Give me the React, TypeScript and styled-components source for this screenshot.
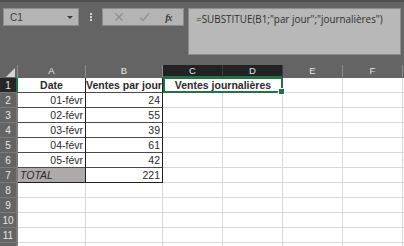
import React from 'react';
import styled, { createGlobalStyle } from 'styled-components';

const GlobalStyle = createGlobalStyle`
  html, body {
    margin: 0;
    padding: 0;
    background: #646464;
    overflow: hidden;
  }
  body {
    font-family: "Liberation Sans", Arial, sans-serif;
  }
`;

const GREEN = '#217346';
const GRID = '#d9d9d9';
const INK = '#2b2b2b';

const Page = styled.div`
  width: 404px;
  height: 246px;
  background: #646464;
  border-top: 2px solid #4f4f4f;
  box-sizing: border-box;
  overflow: hidden;
`;

const Toolbar = styled.div`
  height: 63px;
  display: flex;
  align-items: flex-start;
  padding: 6px 0 0 3px;
  box-sizing: border-box;
`;

const NameBox = styled.div`
  width: 76px;
  height: 18px;
  background: #b4b4b4;
  border: 1px solid #8c8c8c;
  box-sizing: border-box;
  display: flex;
  align-items: center;
  justify-content: space-between;
  padding: 0 5px 0 6px;
  font-size: 10px;
  color: #3c3c3c;
`;

const Caret = styled.span`
  width: 0;
  height: 0;
  border-left: 3px solid transparent;
  border-right: 3px solid transparent;
  border-top: 3px solid #3c3c3c;
`;

const Dots = styled.div`
  width: 23px;
  height: 18px;
  display: flex;
  flex-direction: column;
  align-items: center;
  justify-content: center;
  gap: 1px;
  span {
    width: 2px;
    height: 2px;
    background: #d6d6d6;
  }
`;

const FxBox = styled.div`
  width: 82px;
  height: 18px;
  background: #b4b4b4;
  border: 1px solid #8c8c8c;
  box-sizing: border-box;
  display: flex;
  align-items: center;
  justify-content: space-around;
  padding: 0 4px;
  margin-right: 4px;
`;

const FxLabel = styled.span`
  font-family: "Liberation Serif", "Times New Roman", serif;
  font-style: italic;
  font-weight: bold;
  font-size: 10px;
  color: #3c3c3c;
  letter-spacing: -1px;
`;

const FormulaBox = styled.div`
  width: 213px;
  height: 47px;
  background: #b8b8b8;
  border: 1px solid #8c8c8c;
  box-sizing: border-box;
  padding: 3px 0 0 7px;
  font-family: "Open Sans", "Liberation Sans", sans-serif;
  font-size: 9.9px;
  line-height: 14px;
  color: #2e2e2e;
  white-space: nowrap;
`;

const Sheet = styled.div`
  display: grid;
  grid-template-columns: 18px 68px 77px 60px 60px 60px 60px 1fr;
  grid-template-rows: 13px repeat(12, 15px);
  font-family: "Liberation Sans", Arial, sans-serif;
  font-size: 10.5px;
`;

const Corner = styled.div`
  background: #646464;
  border-right: 1px solid #8c8c8c;
  position: relative;
  &::after {
    content: '';
    position: absolute;
    right: 2px;
    bottom: 1px;
    width: 0;
    height: 0;
    border-left: 9px solid transparent;
    border-bottom: 9px solid #d4d4d4;
  }
`;

const ColHead = styled.div<{ $active?: boolean }>`
  background: ${(p) => (p.$active ? '#222222' : '#646464')};
  color: ${(p) => (p.$active ? '#dfe9ef' : '#e6e6e6')};
  border-right: 1px solid ${(p) => (p.$active ? '#3c3c3c' : '#8c8c8c')};
  border-bottom: 2px solid ${(p) => (p.$active ? GREEN : '#646464')};
  box-sizing: border-box;
  display: flex;
  align-items: center;
  justify-content: center;
  font-size: 9.5px;
`;

const RowHead = styled.div<{ $active?: boolean }>`
  background: ${(p) => (p.$active ? '#262626' : '#646464')};
  color: ${(p) => (p.$active ? '#dfe9ef' : '#e6e6e6')};
  border-right: 2px solid ${(p) => (p.$active ? GREEN : '#7a7a7a')};
  border-bottom: 1px solid #7a7a7a;
  box-sizing: border-box;
  display: flex;
  align-items: center;
  justify-content: center;
  font-size: 10px;
`;

const Cell = styled.div<{
  $align?: 'left' | 'center' | 'right';
  $bold?: boolean;
  $italic?: boolean;
  $fill?: string;
  $right?: string;
  $bottom?: string;
}>`
  background: ${(p) => p.$fill || '#ffffff'};
  border-right: 1px solid ${(p) => p.$right || GRID};
  border-bottom: 1px solid ${(p) => p.$bottom || GRID};
  box-sizing: border-box;
  display: flex;
  align-items: center;
  justify-content: ${(p) =>
    p.$align === 'left' ? 'flex-start' : p.$align === 'center' ? 'center' : 'flex-end'};
  padding: 0 2px 0 2px;
  font-weight: ${(p) => (p.$bold ? 'bold' : 'normal')};
  font-style: ${(p) => (p.$italic ? 'italic' : 'normal')};
  color: ${INK};
  white-space: nowrap;
  overflow: hidden;
`;

const Selection = styled.div`
  grid-column: span 2;
  position: relative;
  background: #ffffff;
  border: 2px solid ${GREEN};
  border-top-width: 1px;
  box-sizing: border-box;
  display: flex;
  align-items: center;
  justify-content: center;
  font-weight: bold;
  color: ${INK};
  white-space: nowrap;
`;

const Handle = styled.span`
  position: absolute;
  right: -4px;
  bottom: -4px;
  width: 5px;
  height: 5px;
  background: ${GREEN};
  border: 1px solid #ffffff;
`;

const columns = ['A', 'B', 'C', 'D', 'E', 'F', ''];
const data: [string, string][] = [
  ['01-févr', '24'],
  ['02-févr', '55'],
  ['03-févr', '39'],
  ['04-févr', '61'],
  ['05-févr', '42'],
];

const EDGE = '#1e1e1e';
const INNER = '#4a4a4a';

const Blank: React.FC<{ count: number }> = ({ count }) => (
  <>
    {Array.from({ length: count }).map((_, i) => (
      <Cell key={i} />
    ))}
  </>
);

const App: React.FC = () => {
  return (
    <>
      <GlobalStyle />
      <Page>
        <Toolbar>
          <NameBox>
            C1
            <Caret />
          </NameBox>
          <Dots>
            <span />
            <span />
            <span />
          </Dots>
          <FxBox>
            <svg width="10" height="10" viewBox="0 0 10 10">
              <path d="M1.5 1.5 L8.5 8.5 M8.5 1.5 L1.5 8.5" stroke="#8e8e8e" strokeWidth="1.2" />
            </svg>
            <svg width="11" height="10" viewBox="0 0 11 10">
              <path d="M1 5.5 L4 8.5 L10 1.5" stroke="#8e8e8e" strokeWidth="1.3" fill="none" />
            </svg>
            <FxLabel>fx</FxLabel>
          </FxBox>
          <FormulaBox>=SUBSTITUE(B1;"par jour";"journalières")</FormulaBox>
        </Toolbar>
        <Sheet>
          <Corner />
          {columns.map((c, i) => (
            <ColHead key={i} $active={c === 'C' || c === 'D'}>
              {c}
            </ColHead>
          ))}

          <RowHead $active>1</RowHead>
          <Cell $align="center" $bold $right={EDGE} $bottom={INNER}>
            Date
          </Cell>
          <Cell $align="center" $bold $right={EDGE} $bottom={INNER}>
            Ventes par jour
          </Cell>
          <Selection>
            Ventes journalières
            <Handle />
          </Selection>
          <Blank count={3} />

          {data.map(([d, v], i) => (
            <React.Fragment key={d}>
              <RowHead>{i + 2}</RowHead>
              <Cell $right={EDGE} $bottom={INNER}>
                {d}
              </Cell>
              <Cell $right={EDGE} $bottom={INNER}>
                {v}
              </Cell>
              <Blank count={5} />
            </React.Fragment>
          ))}

          <RowHead>7</RowHead>
          <Cell $align="left" $italic $fill="#aeaaaa" $right={EDGE} $bottom={EDGE}>
            TOTAL
          </Cell>
          <Cell $right={EDGE} $bottom={EDGE}>
            221
          </Cell>
          <Blank count={5} />

          {[8, 9, 10, 11].map((n) => (
            <React.Fragment key={n}>
              <RowHead>{n}</RowHead>
              <Blank count={7} />
            </React.Fragment>
          ))}
          {/* row 12 is only a sliver at the bottom edge */}
          <RowHead />
          <Blank count={7} />
        </Sheet>
      </Page>
    </>
  );
};

export default App;
